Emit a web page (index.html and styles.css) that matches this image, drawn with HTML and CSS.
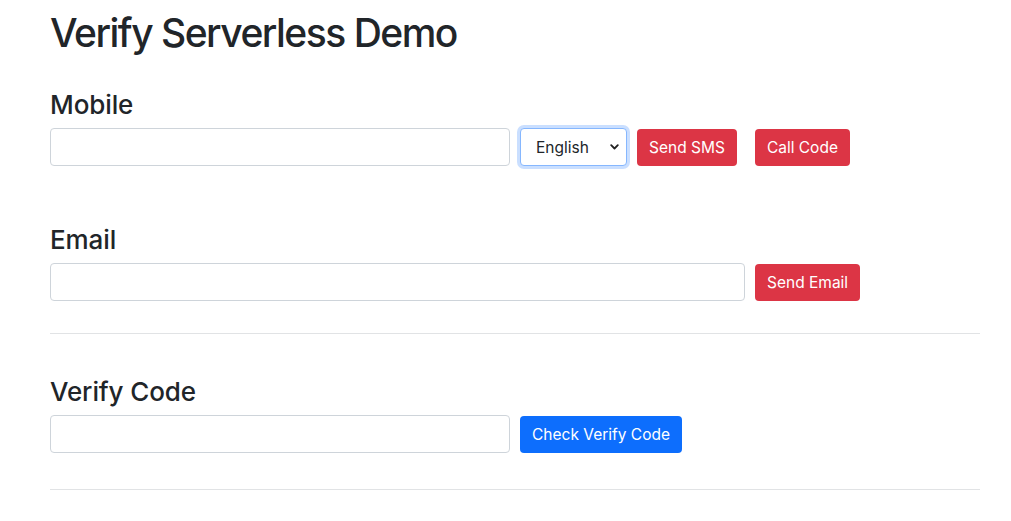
FILE: index.html
```html
<!DOCTYPE html>
<html lang="en">
<head>
<meta charset="utf-8">
<title>Verify Serverless Demo</title>
<link rel="stylesheet" href="styles.css">
</head>
<body>
<main class="container">
  <h1 class="title">Verify Serverless Demo</h1>

  <section class="group group-mobile">
    <h3 class="label">Mobile</h3>
    <div class="row">
      <input class="field field-mobile" type="text">
      <select class="lang">
        <option>English</option>
      </select>
      <button class="btn btn-red">Send SMS</button>
      <button class="btn btn-red btn-call">Call Code</button>
    </div>
  </section>

  <section class="group group-email">
    <h3 class="label">Email</h3>
    <div class="row">
      <input class="field field-email" type="email">
      <button class="btn btn-red">Send Email</button>
    </div>
  </section>

  <hr class="rule rule-1">

  <section class="group group-code">
    <h3 class="label">Verify Code</h3>
    <div class="row">
      <input class="field field-code" type="text">
      <button class="btn btn-blue">Check Verify Code</button>
    </div>
  </section>

  <hr class="rule rule-2">
</main>
</body>
</html>
```

FILE: styles.css
```css
* { box-sizing: border-box; }

html, body {
  margin: 0;
  padding: 0;
  background: #fff;
}

body {
  font-family: Inter, "Liberation Sans", Arial, sans-serif;
  color: #212529;
}

.container {
  padding: 9px 31px 0 50px;
}

.title {
  margin: 0;
  font-size: 39px;
  font-weight: 500;
  line-height: 48px;
  letter-spacing: -1.5px;
}

.label {
  margin: 0 0 6px 0;
  font-size: 26px;
  font-weight: 500;
  line-height: 34px;
  letter-spacing: -0.1px;
}

.group-mobile { margin-top: 31px; }
.group-email { margin-top: 57px; }
.group-code { margin-top: 41px; }

.row {
  display: flex;
  align-items: center;
  gap: 10px;
}

.field {
  height: 38px;
  border: 1px solid #ced4da;
  border-radius: 4px;
  background: #fff;
  padding: 6px 12px;
  font: inherit;
  font-size: 16px;
}

.field-mobile { width: 460px; }
.field-email { width: 695px; }
.field-code { width: 460px; }

.lang {
  -webkit-appearance: none;
  appearance: none;
  width: 107px;
  height: 38px;
  padding: 0 28px 0 15px;
  font-family: inherit;
  font-size: 15.5px;
  color: #212529;
  border: 1px solid #86b7fe;
  border-radius: 4px;
  box-shadow: 0 0 0 3px rgba(13, 110, 253, 0.22);
  background: #fff url("data:image/svg+xml,%3Csvg xmlns='http://www.w3.org/2000/svg' width='9' height='6' viewBox='0 0 9 6'%3E%3Cpath d='M1.2 1.2 L4.5 4.5 L7.8 1.2' fill='none' stroke='%23222' stroke-width='1.8' stroke-linecap='round' stroke-linejoin='round'/%3E%3C/svg%3E") no-repeat right 7px center;
  outline: none;
}

.btn {
  height: 37px;
  padding: 0 12px;
  border: 0;
  border-radius: 4px;
  font-family: inherit;
  font-size: 15.5px;
  color: #fff;
  cursor: pointer;
  white-space: nowrap;
}

.btn-red { background: #dc3545; }
.btn-blue { background: #0d6efd; }
.btn-call { margin-left: 8px; }

.rule {
  border: 0;
  border-top: 1px solid #e1e3e5;
  margin: 0;
}

.rule-1 { margin-top: 32px; }
.rule-2 { margin-top: 36px; }
```
